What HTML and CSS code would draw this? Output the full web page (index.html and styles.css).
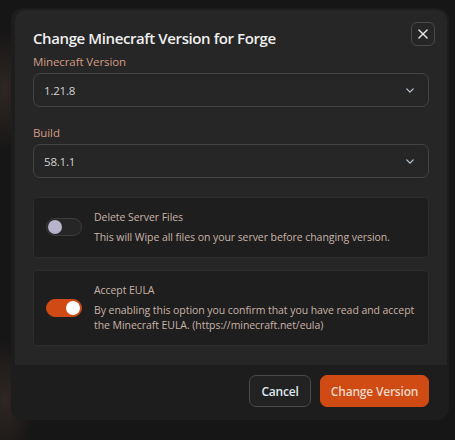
FILE: index.html
```html
<!DOCTYPE html>
<html lang="en">
<head>
<meta charset="utf-8">
<title>Change Minecraft Version</title>
<link rel="stylesheet" href="styles.css">
</head>
<body>
<div class="modal">
  <div class="modal-body">
    <button class="close" aria-label="Close">
      <svg viewBox="0 0 24 24" width="14" height="14"><path d="M5 5L19 19M19 5L5 19" stroke="#e6e6e6" stroke-width="2.4" stroke-linecap="round" fill="none"/></svg>
    </button>
    <h2 class="title">Change Minecraft Version for Forge</h2>
    <div class="field">
      <label class="label">Minecraft Version</label>
      <div class="select"><span>1.21.8</span>
        <svg class="chev" viewBox="0 0 10 6" width="8" height="5"><path d="M1 1L5 5L9 1" stroke="#b9c4d0" stroke-width="1.6" fill="none" stroke-linecap="round" stroke-linejoin="round"/></svg>
      </div>
    </div>
    <div class="field field-build">
      <label class="label">Build</label>
      <div class="select"><span>58.1.1</span>
        <svg class="chev" viewBox="0 0 10 6" width="8" height="5"><path d="M1 1L5 5L9 1" stroke="#b9c4d0" stroke-width="1.6" fill="none" stroke-linecap="round" stroke-linejoin="round"/></svg>
      </div>
    </div>
    <div class="card card-first">
      <div class="toggle"><div class="knob"></div></div>
      <div class="card-text">
        <div class="card-title">Delete Server Files</div>
        <div class="card-desc">This will Wipe all files on your server before changing version.</div>
      </div>
    </div>
    <div class="card">
      <div class="toggle on"><div class="knob"></div></div>
      <div class="card-text">
        <div class="card-title">Accept EULA</div>
        <div class="card-desc">By enabling this option you confirm that you have read and accept the Minecraft EULA. (https://minecraft.net/eula)</div>
      </div>
    </div>
  </div>
  <div class="modal-footer">
    <button class="btn btn-cancel">Cancel</button>
    <button class="btn btn-primary">Change Version</button>
  </div>
</div>
</body>
</html>
```
FILE: styles.css
```css
html, body {
  margin: 0;
  padding: 0;
}
body {
  width: 455px;
  height: 440px;
  overflow: hidden;
  background:
    radial-gradient(ellipse 30px 60px at 5px 90px, rgba(90,70,60,0.35), transparent),
    radial-gradient(ellipse 30px 60px at 5px 400px, rgba(90,70,60,0.35), transparent),
    #171616;
  font-family: "Open Sans", "Noto Sans", sans-serif;
  padding-top: 8px;
  padding-left: 11px;
  box-sizing: border-box;
}
.modal {
  width: 438px;
  height: 412px;
  background: #1d1d1d;
  border-radius: 12px;
  overflow: hidden;
  display: flex;
  flex-direction: column;
}
.modal-body {
  position: relative;
  margin: 2px 2px 0 4px;
  background: #262626;
  border-radius: 11px 11px 0 0;
  padding: 18px 18px 18px 18px;
  height: 355px;
  box-sizing: border-box;
}
.close {
  position: absolute;
  top: 12px;
  right: 12px;
  width: 24px;
  height: 24px;
  border: 1px solid #4b4b4b;
  border-radius: 6px;
  background: #262626;
  padding: 0;
  display: flex;
  align-items: center;
  justify-content: center;
}
.title {
  margin: 0;
  font-size: 15px;
  line-height: 20px;
  font-weight: 600;
  color: #efefef;
  letter-spacing: -0.4px;
}
.field {
  margin-top: 6px;
}
.field-build {
  margin-top: 18px;
}
.label {
  display: block;
  font-size: 11.5px;
  line-height: 16px;
  font-weight: 500;
  color: #d29b84;
  margin-bottom: 3px;
  letter-spacing: -0.1px;
}
.select {
  height: 34px;
  box-sizing: border-box;
  border: 1px solid #444444;
  border-radius: 7px;
  background: #262626;
  display: flex;
  align-items: center;
  justify-content: space-between;
  padding: 0 14px 0 10px;
  font-size: 11.5px;
  color: #d2d2d2;
  letter-spacing: -0.2px;
}
.chev {
  display: block;
}
.card {
  margin-top: 12px;
  background: #1e1e1e;
  border: 1px solid #2c2c2c;
  border-radius: 4px;
  display: flex;
  align-items: center;
  padding: 11px 10px 12px 12px;
  gap: 12px;
}
.card-first {
  margin-top: 19px;
}
.toggle {
  flex: none;
  width: 36px;
  height: 18px;
  box-sizing: border-box;
  border-radius: 9px;
  background: #262626;
  border: 1px solid #3d3d3d;
  position: relative;
}
.toggle .knob {
  position: absolute;
  top: 1px;
  left: 1px;
  width: 14px;
  height: 14px;
  border-radius: 50%;
  background: #b7b4cc;
}
.toggle.on {
  background: #d04a15;
  border-color: #d04a15;
}
.toggle.on .knob {
  left: 19px;
  background: #ffffff;
}
.card-text {
  color: #c8b3a8;
  font-size: 10.5px;
  letter-spacing: -0.06px;
}
.card-title {
  line-height: 16px;
  margin-bottom: 5px;
}
.card-desc {
  line-height: 15px;
}
.modal-footer {
  flex: 1;
  display: flex;
  justify-content: flex-end;
  align-items: flex-start;
  gap: 9px;
  padding: 10px 20px 0 0;
}
.btn {
  height: 32px;
  border-radius: 7px;
  font-family: "Open Sans", "Noto Sans", sans-serif;
  font-size: 12px;
  font-weight: 600;
  padding: 0;
  white-space: nowrap;
  letter-spacing: -0.2px;
}
.btn-cancel {
  width: 62px;
  background: #222222;
  border: 1px solid #4a4a4a;
  color: #dfe6ef;
}
.btn-primary {
  width: 109px;
  background: #d04a14;
  border: 1px solid #d04a14;
  color: #f7d7c8;
}
```
